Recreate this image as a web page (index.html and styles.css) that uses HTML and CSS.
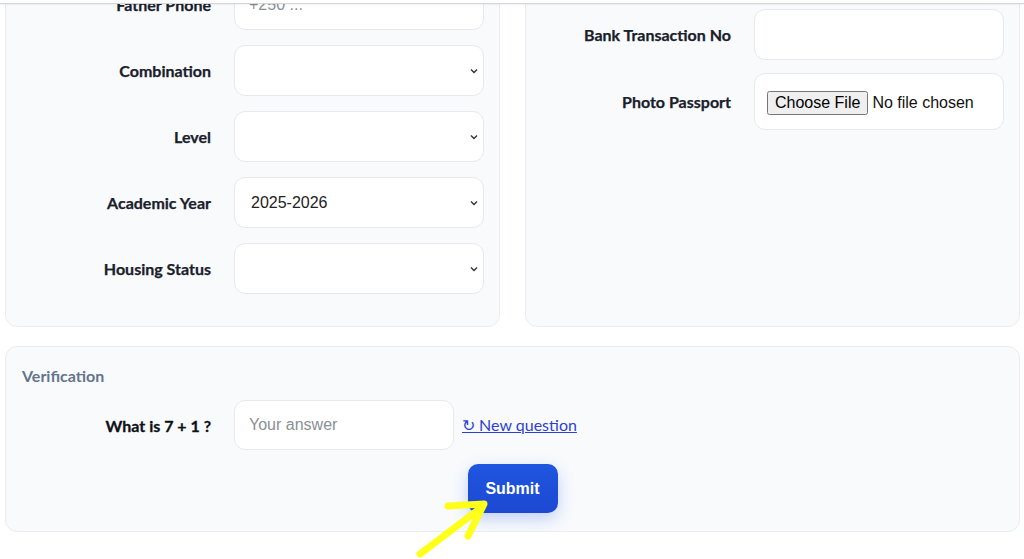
FILE: index.html
```html
<!DOCTYPE html>
<html>
<head>
  <meta charset="utf-8">
  <title>Registration</title>
  <link rel="stylesheet" href="styles.css">
</head>
<body>
  <div class="topbar"></div>
  <form class="page">
    <div class="columns">
      <section class="card">
        <label class="lbl">Father Phone</label>
        <input class="field" type="text" placeholder="+250 ...">
        <label class="lbl">Combination</label>
        <select class="field"><option></option></select>
        <label class="lbl">Level</label>
        <select class="field"><option></option></select>
        <label class="lbl">Academic Year</label>
        <select class="field"><option>2025-2026</option></select>
        <label class="lbl">Housing Status</label>
        <select class="field"><option></option></select>
      </section>
      <section class="card card-pay">
        <label class="lbl">Bank Transaction No</label>
        <input class="field" type="text">
        <label class="lbl">Photo Passport</label>
        <input class="field file" type="file">
      </section>
    </div>

    <section class="card verify">
      <h3 class="verify-title">Verification</h3>
      <div class="verify-row">
        <label class="lbl q">What is 7 + 1 ?</label>
        <input class="field answer" type="text" placeholder="Your answer">
        <a class="refresh" href="#">&#x21bb; New question</a>
      </div>
      <div class="actions">
        <button class="submit" type="submit">Submit</button>
      </div>
    </section>
  </form>

  <svg class="pointer" width="90" height="70" viewBox="0 0 90 70">
    <path d="M8 64 L70 17" stroke="#ffff1a" stroke-width="7" stroke-linecap="round" fill="none"/>
    <path d="M36 16 L72 14 L56 46" stroke="#ffff1a" stroke-width="7" stroke-linecap="round" stroke-linejoin="round" fill="none"/>
  </svg>
</body>
</html>
```

FILE: styles.css
```css
body { margin:0; background:#fff; font-family:"Liberation Sans", Arial, sans-serif; overflow:hidden; }

.topbar {
  position:fixed; top:0; left:0; right:0;
  height:3px; background:#fff;
  border-bottom:1px solid #d4d6da;
  box-shadow:0 1px 2px rgba(0,0,0,0.06);
  z-index:5;
}

.page { margin-top:-45px; padding:0 4px 0 5px; }

.columns { display:grid; grid-template-columns:minmax(0,1fr) minmax(0,1fr); gap:25px; }

.card {
  background:#f8fafc;
  border:1px solid #e9edf2;
  border-radius:12px;
  padding:23px 15px 32px 15px;
  display:grid;
  grid-template-columns:190px minmax(0,1fr);
  column-gap:23px;
  row-gap:15px;
  align-items:center;
  align-content:start;
}
.card-pay { padding-top:53px; row-gap:13px; }

.lbl {
  font-family:Lato, "Open Sans", sans-serif;
  font-weight:700; font-size:16px;
  color:#1a202b; text-align:right;
  -webkit-text-stroke:0.25px #1a202b;
}

.field {
  width:100%; min-width:0;
  height:51px; box-sizing:border-box;
  border:1px solid #e6e9ee; border-radius:11px;
  background:#fff; padding:0 14px;
  font-family:"Liberation Sans", Arial, sans-serif; font-size:16px; color:#222;
}
.field::placeholder { color:#8a8f96; }
select.field {
  appearance:none; -webkit-appearance:none;
  padding:0 24px 0 16px;
  background:#fff url("data:image/svg+xml,%3Csvg xmlns='http://www.w3.org/2000/svg' width='8' height='6' viewBox='0 0 8 6'%3E%3Cpath d='M1 1.5 L4 4.5 L7 1.5' stroke='%23333' stroke-width='1.4' fill='none'/%3E%3C/svg%3E") no-repeat right 5px center;
}
.file { height:57px; padding:17px 12px 13px; color:#111; }

.verify { display:block; margin-top:19px; padding:19px 15px 18px 15px; }
.verify-title {
  margin:0 0 15px 1px;
  font-family:Lato, "Open Sans", sans-serif;
  font-size:16px; font-weight:700; color:#64748b;
}
.verify-row { display:flex; align-items:center; }
.q { width:190px; margin-right:23px; color:#0f1115; -webkit-text-stroke:0.3px #0f1115; }
.answer { width:220px; height:50px; }
.refresh {
  margin-left:8px;
  font-family:Lato, "Open Sans", sans-serif; font-size:16px;
  color:#2e3fd3;
}

.actions { display:flex; justify-content:center; margin-top:14px; }
.submit {
  width:90px; height:49px;
  border:0; border-radius:10px;
  background:linear-gradient(#1f56e0, #1d48d2);
  color:#fff; font-family:"Liberation Sans", Arial, sans-serif;
  font-size:16px; font-weight:700;
  box-shadow:0 6px 16px rgba(37,84,230,0.25);
}

.pointer { position:absolute; left:412px; top:490px; }
```
